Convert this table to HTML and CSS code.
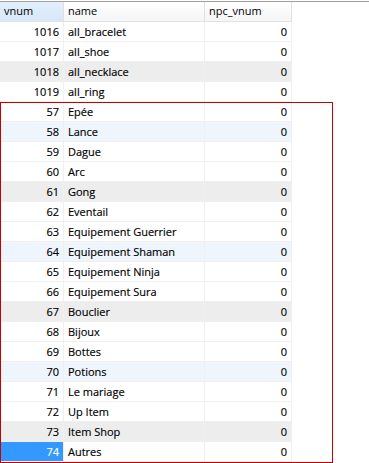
FILE: index.html
```html
<!DOCTYPE html>
<html>
<head>
<meta charset="utf-8">
<link rel="stylesheet" href="styles.css">
</head>
<body>
<div class="topline"></div>
<div class="grid">
  <div class="hdr">
    <div class="hc c1 sorted">vnum</div>
    <div class="hc c2">name</div>
    <div class="hc c3">npc_vnum</div>
  </div>
  <div class="row"><div class="c c1 num">1016</div><div class="c c2">all_bracelet</div><div class="c c3 num">0</div></div>
  <div class="row"><div class="c c1 num">1017</div><div class="c c2">all_shoe</div><div class="c c3 num">0</div></div>
  <div class="row gray"><div class="c c1 num">1018</div><div class="c c2">all_necklace</div><div class="c c3 num">0</div></div>
  <div class="row"><div class="c c1 num">1019</div><div class="c c2">all_ring</div><div class="c c3 num">0</div></div>
  <div class="row"><div class="c c1 num">57</div><div class="c c2">Epée</div><div class="c c3 num">0</div></div>
  <div class="row blue"><div class="c c1 num">58</div><div class="c c2">Lance</div><div class="c c3 num">0</div></div>
  <div class="row"><div class="c c1 num">59</div><div class="c c2">Dague</div><div class="c c3 num">0</div></div>
  <div class="row"><div class="c c1 num">60</div><div class="c c2">Arc</div><div class="c c3 num">0</div></div>
  <div class="row gray"><div class="c c1 num">61</div><div class="c c2">Gong</div><div class="c c3 num">0</div></div>
  <div class="row"><div class="c c1 num">62</div><div class="c c2">Eventail</div><div class="c c3 num">0</div></div>
  <div class="row"><div class="c c1 num">63</div><div class="c c2">Equipement Guerrier</div><div class="c c3 num">0</div></div>
  <div class="row blue"><div class="c c1 num">64</div><div class="c c2">Equipement Shaman</div><div class="c c3 num">0</div></div>
  <div class="row"><div class="c c1 num">65</div><div class="c c2">Equipement Ninja</div><div class="c c3 num">0</div></div>
  <div class="row"><div class="c c1 num">66</div><div class="c c2">Equipement Sura</div><div class="c c3 num">0</div></div>
  <div class="row gray"><div class="c c1 num">67</div><div class="c c2">Bouclier</div><div class="c c3 num">0</div></div>
  <div class="row"><div class="c c1 num">68</div><div class="c c2">Bijoux</div><div class="c c3 num">0</div></div>
  <div class="row"><div class="c c1 num">69</div><div class="c c2">Bottes</div><div class="c c3 num">0</div></div>
  <div class="row blue"><div class="c c1 num">70</div><div class="c c2">Potions</div><div class="c c3 num">0</div></div>
  <div class="row"><div class="c c1 num">71</div><div class="c c2">Le mariage</div><div class="c c3 num">0</div></div>
  <div class="row"><div class="c c1 num">72</div><div class="c c2">Up Item</div><div class="c c3 num">0</div></div>
  <div class="row gray"><div class="c c1 num">73</div><div class="c c2">Item Shop</div><div class="c c3 num">0</div></div>
  <div class="row"><div class="c c1 num sel">74</div><div class="c c2">Autres</div><div class="c c3 num">0</div></div>
</div>
<div class="redbox"></div>
</body>
</html>
```
FILE: styles.css
```css
html, body {
  margin: 0;
  padding: 0;
  background: #fff;
  width: 369px;
  height: 463px;
  overflow: hidden;
  position: relative;
  font-family: "Open Sans", "DejaVu Sans", sans-serif;
  font-size: 11px;
  color: #000;
}
.topline {
  height: 1px;
  margin-top: 1px;
  background: #a0a0a0;
}
.grid {
  width: 292px;
}
.hdr {
  display: flex;
  height: 19px;
  border-bottom: 1px solid #e3e3e3;
  background: linear-gradient(#ffffff, #f4f5f7);
}
.hc {
  box-sizing: border-box;
  padding-left: 4px;
  line-height: 18px;
  border-right: 1px solid #e0e0e0;
  color: #000;
}
.hc.sorted {
  background: linear-gradient(#e3effb, #d6e8f9);
}
.c1 { width: 64px; }
.c2 { width: 141px; }
.c3 { width: 87px; }
.row {
  display: flex;
  height: 20px;
}
.c {
  box-sizing: border-box;
  height: 20px;
  line-height: 19px;
  border-right: 1px solid #f0f0f0;
  border-bottom: 1px solid #f0f0f0;
  padding-left: 4px;
  white-space: nowrap;
  overflow: hidden;
  -webkit-text-stroke: 0.15px #000;
}
.c.num {
  text-align: right;
  padding-left: 0;
  padding-right: 4px;
}
.row.gray .c { background: #ededed; }
.row.blue .c { background: #eef5fd; }
.c.sel {
  background: #3399ff;
  color: #fff;
  -webkit-text-stroke: 0.15px #fff;
}
.redbox {
  position: absolute;
  left: 0;
  top: 102px;
  width: 333px;
  height: 361px;
  box-sizing: border-box;
  border: 1px solid #c80000;
}
```
